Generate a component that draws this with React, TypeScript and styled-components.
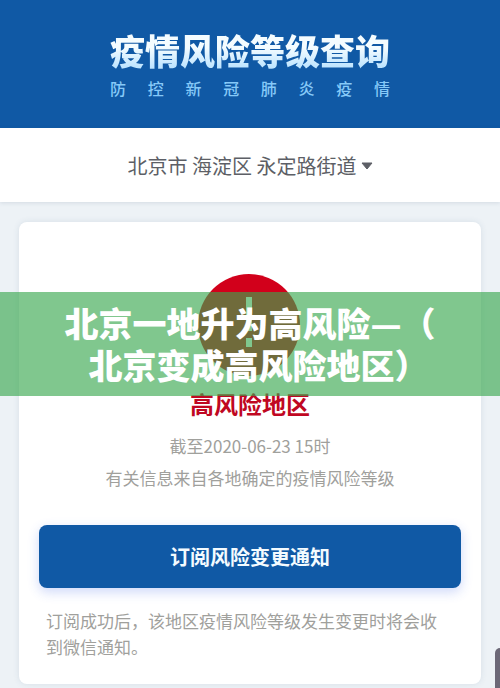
import React from "react";
import styled, { createGlobalStyle } from "styled-components";

const GlobalStyle = createGlobalStyle`
  *, *::before, *::after { box-sizing: border-box; }
  body {
    margin: 0;
    background: #edf2f6;
    font-family: "Noto Sans CJK SC", "Noto Sans", sans-serif;
  }
`;

const Page = styled.div`
  position: relative;
  min-height: 100vh;
  overflow: hidden;
  background: #edf2f6;
`;

const Header = styled.header`
  display: flex;
  flex-direction: column;
  align-items: center;
  padding: 26px 16px 28px;
  background: #1059a5;
`;

const TitleGroup = styled.div`
  display: flex;
  flex-direction: column;
  gap: 2px;
`;

const Title = styled.h1`
  margin: 0;
  font-size: 35px;
  line-height: 48px;
  font-weight: 900;
  color: transparent;
  background: linear-gradient(#f4fcff 45%, #bfe5ff 85%);
  background-clip: text;
  -webkit-background-clip: text;
`;

const Subtitle = styled.p`
  margin: 0;
  font-size: 16px;
  line-height: 24px;
  font-weight: 500;
  color: #86c9f8;
  text-align: justify;
  text-align-last: justify;
`;

const RegionBar = styled.div`
  display: flex;
  justify-content: center;
  padding: 22px 16px 20px;
  background: #fff;
  box-shadow: 0 1px 4px rgba(60, 80, 110, 0.14);
`;

const RegionPicker = styled.div`
  display: flex;
  align-items: center;
  gap: 4px;
  color: #5d5f66;
`;

const RegionSelect = styled.select`
  appearance: none;
  margin: 0;
  padding: 0;
  border: 0;
  background: transparent;
  color: inherit;
  font-family: inherit;
  font-size: 20px;
  line-height: 32px;
  cursor: pointer;
`;

const Main = styled.main`
  padding: 20px 19px 4px;
`;

const Card = styled.section`
  display: flex;
  flex-direction: column;
  align-items: center;
  padding: 52px 20px 24px;
  border-radius: 8px;
  background: #fff;
  box-shadow: 0 0 6px rgba(60, 90, 120, 0.12);
`;

const RiskLevel = styled.h2`
  margin: 6px 0;
  font-size: 24px;
  line-height: 40px;
  font-weight: 700;
  color: #c00722;
`;

const Detail = styled.p`
  margin: 0;
  font-size: 17px;
  line-height: 32px;
  color: #a0a09c;
`;

const SubscribeButton = styled.button`
  align-self: stretch;
  height: 63px;
  margin: 31px 0 20px;
  border: 0;
  border-radius: 8px;
  background: #1059a5;
  box-shadow: 0 4px 12px rgba(50, 90, 230, 0.24);
  color: #f4fbff;
  font-family: inherit;
  font-size: 20px;
  font-weight: 700;
  cursor: pointer;
`;

const Notice = styled.p`
  align-self: stretch;
  margin: 0;
  padding: 0 16px 0 7px;
  font-size: 17px;
  line-height: 26px;
  color: #a0a09c;
`;

const Banner = styled.div`
  position: absolute;
  top: 292px;
  left: 0;
  right: 0;
  padding: 10px 60px;
  background: rgba(57, 167, 78, 0.64);
  color: #fff;
  font-size: 34px;
  line-height: 42px;
  font-weight: 900;
  text-align: center;
`;

const BannerLine = styled.div<{ $halfWidthMarks?: boolean }>`
  font-feature-settings: ${(p) => (p.$halfWidthMarks ? '"halt"' : "normal")};
`;

const SideTab = styled.div`
  position: absolute;
  right: 0;
  bottom: 0;
  width: 5px;
  height: 40px;
  border-radius: 5px 0 0 0;
  background: #6c6877;
`;

const CaretIcon = () => (
  <svg width="12" height="8" viewBox="0 0 12 8" aria-hidden="true">
    <path d="M1 1h10L6 7z" fill="#5d5f66" stroke="#5d5f66" strokeLinejoin="round" />
  </svg>
);

const AlertIcon = () => (
  <svg width="104" height="104" viewBox="0 0 104 104" aria-hidden="true">
    <circle cx="51" cy="51" r="51" fill="#d2001b" />
    <path d="M48 23h6v34h-6zM48 64h6v9h-6z" fill="#fff" />
  </svg>
);

export default function App() {
  return (
    <>
      <GlobalStyle />
      <Page>
        <Header>
          <TitleGroup>
            <Title>疫情风险等级查询</Title>
            <Subtitle>防控新冠肺炎疫情</Subtitle>
          </TitleGroup>
        </Header>
        <RegionBar>
          <RegionPicker>
            <RegionSelect aria-label="地区">
              <option>北京市 海淀区 永定路街道</option>
            </RegionSelect>
            <CaretIcon />
          </RegionPicker>
        </RegionBar>
        <Main>
          <Card>
            <AlertIcon />
            <RiskLevel>高风险地区</RiskLevel>
            <Detail>截至2020-06-23 15时</Detail>
            <Detail>有关信息来自各地确定的疫情风险等级</Detail>
            <SubscribeButton type="button">订阅风险变更通知</SubscribeButton>
            <Notice>订阅成功后，该地区疫情风险等级发生变更时将会收到微信通知。</Notice>
          </Card>
        </Main>
        <Banner>
          <BannerLine>北京一地升为高风险—（</BannerLine>
          <BannerLine $halfWidthMarks>北京变成高风险地区）</BannerLine>
        </Banner>
        <SideTab />
      </Page>
    </>
  );
}
